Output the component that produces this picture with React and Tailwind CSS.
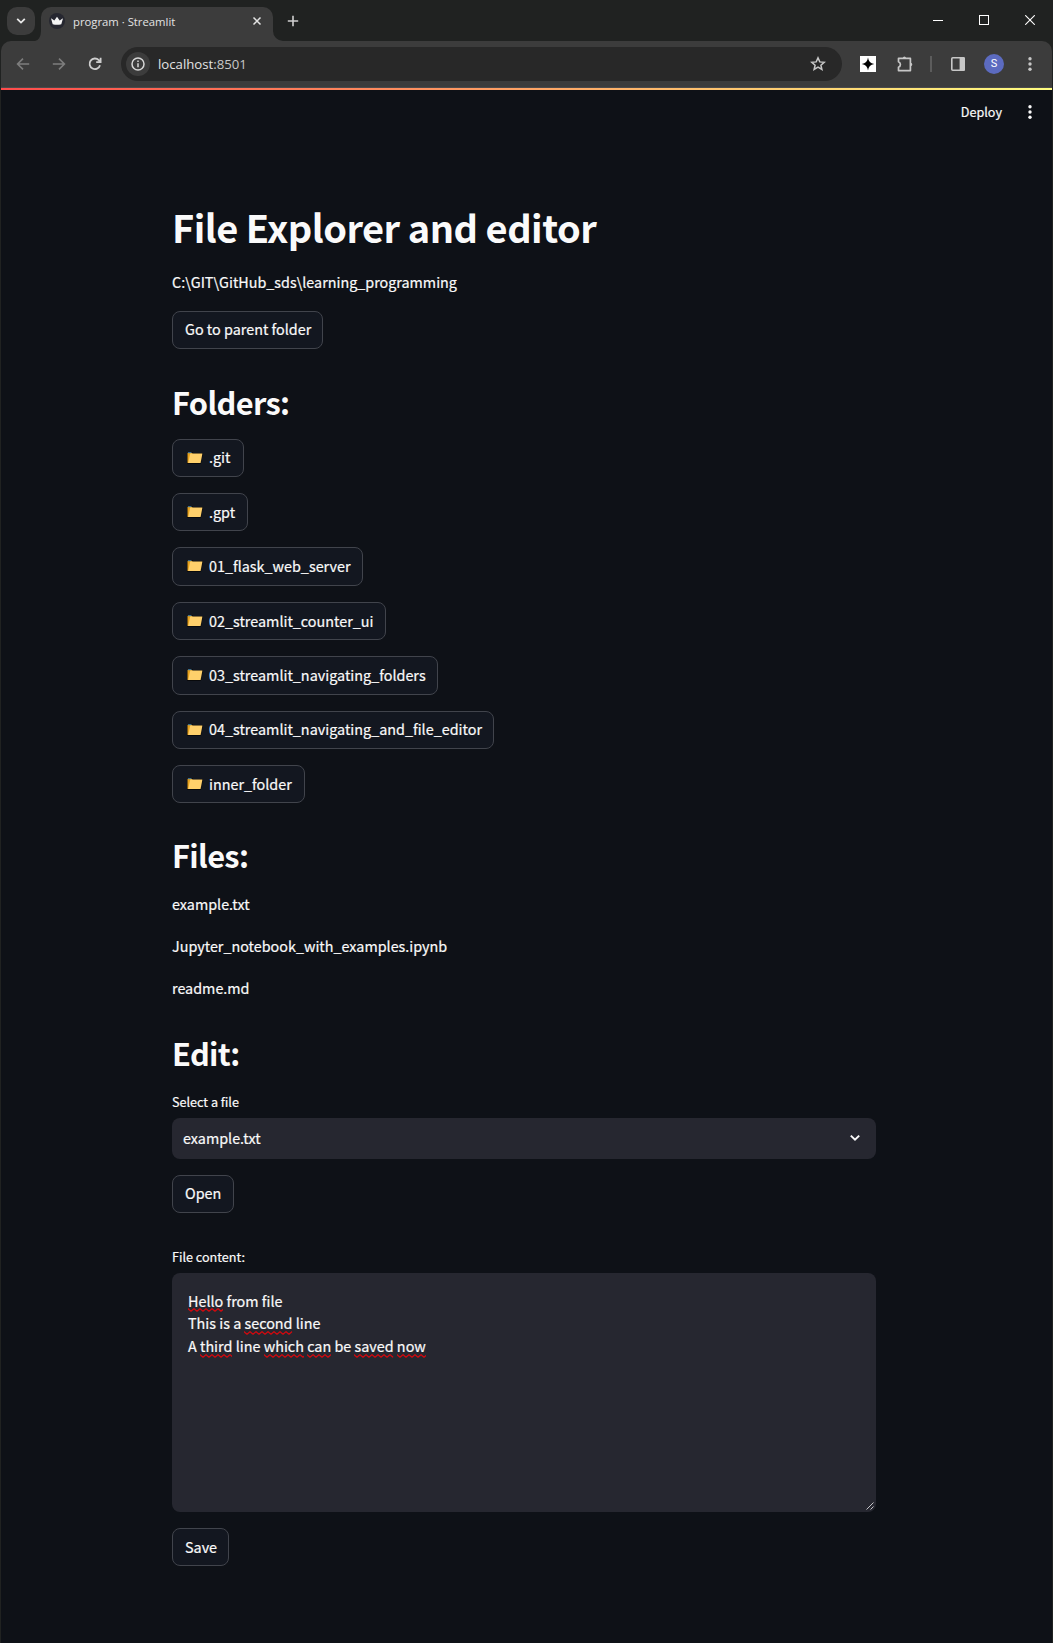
import React from "react";

const source = "font-['Noto_Sans_CJK_SC','Noto_Sans',sans-serif]";
const chrome = "font-['Open_Sans','Noto_Sans',sans-serif]";

const folders = [
  { name: ".git", width: "w-[72px]" },
  { name: ".gpt", width: "w-[76px]" },
  { name: "01_flask_web_server", width: "w-[191px]" },
  { name: "02_streamlit_counter_ui", width: "w-[214px]" },
  { name: "03_streamlit_navigating_folders", width: "w-[266px]" },
  { name: "04_streamlit_navigating_and_file_editor", width: "w-[322px]" },
  { name: "inner_folder", width: "w-[133px]" },
];

const files = ["example.txt", "Jupyter_notebook_with_examples.ipynb", "readme.md"];

function FolderIcon() {
  return (
    <svg width="18" height="14" viewBox="0 0 18 14" className="ml-px mr-[5px] mt-px shrink-0">
      <path d="M1.5 1.5h5l1 1h9l-2 10h-13z" fill="#0a0b0d" stroke="#08090b" strokeWidth="1" />
      <path d="M1.5 1.8h4l1 1V12H1.5z" fill="#e8a21d" />
      <path d="M2 1.2h3.4v1H2z" fill="#3b7fae" />
      <path d="M4.2 2.6h12.2L14.6 12H2.2z" fill="#ffd06b" />
    </svg>
  );
}

function Button({ width, children }) {
  return (
    <button
      className={`flex h-[38.4px] shrink-0 items-center whitespace-nowrap rounded-lg border border-[#41444c] bg-[#131720] pb-[1.2px] pl-3 text-left text-[14.38px] leading-[25.6px] text-[#fafafa] ${width}`}
    >
      {children}
    </button>
  );
}

function SectionHeading({ className, children }) {
  return (
    <h2 className={`text-[30.8px] font-bold leading-[43px] tracking-[-0.65px] [-webkit-text-stroke:0] ${className}`}>
      {children}
    </h2>
  );
}

function Misspelt({ children }) {
  return (
    <span className="relative inline-block">
      {children}
      <svg className="absolute bottom-0 left-0 h-[4px] w-full" aria-hidden="true">
        <defs>
          <pattern id="squiggle" width="6" height="4" patternUnits="userSpaceOnUse">
            <path d="M-1 -.3L0 .6L3 3.2L6 .6L7 -.3" fill="none" stroke="#d5070d" strokeWidth="1.2" />
          </pattern>
        </defs>
        <rect width="100%" height="4" fill="url(#squiggle)" />
      </svg>
    </span>
  );
}

function Kebab({ fill }) {
  return (
    <svg width="16" height="16" viewBox="0 0 16 16" fill={fill}>
      <circle cx="8" cy="2.7" r="1.7" />
      <circle cx="8" cy="8" r="1.7" />
      <circle cx="8" cy="13.3" r="1.7" />
    </svg>
  );
}

function TabStrip() {
  return (
    <div className="flex h-[41px] bg-[#202221]">
      <div className="ml-[6px] mt-[7px] flex size-7 items-center justify-center rounded-[10px] bg-[#3c3c3c]">
        <svg width="10" height="8" viewBox="0 0 10 8" fill="none" stroke="#e8e8e8" strokeWidth="1.8">
          <path d="M1.2 1.8L5 5.6L8.8 1.8" />
        </svg>
      </div>
      <svg width="6" height="10" viewBox="0 0 6 10" className="mt-[31px]">
        <path d="M0 10A6 10 0 0 0 6 0V10z" fill="#3c3c3c" />
      </svg>
      <div className="mt-[7px] flex h-[34px] w-[232px] items-center rounded-t-[10px] bg-[#3c3c3c] pb-[6px]">
        <div className="ml-2 flex size-4 items-center justify-center rounded-full bg-[#262730]">
          <svg width="14" height="10" viewBox="0 0 14 10">
            <path d="M1 2.3L4.3 4.5L7 .8L9.7 4.5L13 2.3L11.3 8.2Q7 9.4 2.7 8.2Z" fill="#f4f4f4" />
          </svg>
        </div>
        <span className={`ml-2 mt-px w-[120px] whitespace-nowrap text-[11.3px] leading-4 text-[#e3e3e3] ${chrome}`}>
          program · Streamlit
        </span>
        <svg width="10" height="10" viewBox="0 0 10 10" className="ml-[59px]" stroke="#e3e3e3" strokeWidth="1.5">
          <path d="M1.5 1.5L8.5 8.5M8.5 1.5L1.5 8.5" />
        </svg>
      </div>
      <svg width="10" height="10" viewBox="0 0 10 10" className="mt-[31px]">
        <path d="M0 0A10 10 0 0 0 10 10H0z" fill="#3c3c3c" />
      </svg>
      <svg width="12" height="12" viewBox="0 0 12 12" className="ml-[4px] mt-[15px]" stroke="#d0d0d0" strokeWidth="1.6">
        <path d="M6 .8V11.2M.8 6H11.2" />
      </svg>
      <div className="ml-auto mr-[17px] flex h-10 items-center gap-9 text-white">
        <svg width="10" height="10" viewBox="0 0 10 10" stroke="currentColor">
          <path d="M0 5.5H10" />
        </svg>
        <svg width="10" height="10" viewBox="0 0 10 10" fill="none" stroke="currentColor">
          <rect x=".5" y=".5" width="9" height="9" />
        </svg>
        <svg width="10" height="10" viewBox="0 0 10 10" stroke="currentColor" strokeWidth="1.1">
          <path d="M.2 .2L9.8 9.8M9.8 .2L.2 9.8" />
        </svg>
      </div>
    </div>
  );
}

function Toolbar() {
  return (
    <div className="flex h-[47px] items-center rounded-t-[10px] border-b border-[#4a4a4c] bg-[#3c3c3c]">
      <svg width="14" height="14" viewBox="0 0 14 14" className="ml-[15px]" fill="none" stroke="#7d7d7d" strokeWidth="1.6">
        <path d="M13.2 7H1.8M7 1.6L1.6 7L7 12.4" />
      </svg>
      <svg width="14" height="14" viewBox="0 0 14 14" className="ml-[22px]" fill="none" stroke="#7d7d7d" strokeWidth="1.6">
        <path d="M.8 7H12.2M7 1.6L12.4 7L7 12.4" />
      </svg>
      <svg width="14" height="14" viewBox="0 0 14 14" className="ml-[22px]" fill="none" stroke="#cfcfcf" strokeWidth="1.8">
        <path d="M12 8.2A5.3 5.3 0 1 1 10.8 3.2L12.6 5M12.6 .8V5.2H8.2" />
      </svg>
      <div className="ml-[19px] flex h-[34px] w-[721px] items-center rounded-full bg-[#282828] pl-[5px] pr-4">
        <div className="flex size-6 items-center justify-center rounded-full bg-[#3c3c3c]">
          <svg width="14" height="14" viewBox="0 0 14 14" fill="none" stroke="#d6d6d6" strokeWidth="1.5">
            <circle cx="7" cy="7" r="6" />
            <path d="M7 6.2V10.3M7 3.6V5.1" />
          </svg>
        </div>
        <span className={`ml-2 whitespace-nowrap text-[13.2px] leading-5 text-[#e3e3e3] ${chrome}`}>
          localhost<span className="text-[#c7c7c7]">:8501</span>
        </span>
        <svg width="16" height="16" viewBox="0 0 16 16" className="ml-auto" fill="none" stroke="#c7c7c7" strokeWidth="1.5">
          <path d="M8 1.9L9.8 5.9L14.2 6.3L10.9 9.2L11.9 13.5L8 11.2L4.1 13.5L5.1 9.2L1.8 6.3L6.2 5.9Z" />
        </svg>
      </div>
      <svg width="16" height="16" viewBox="0 0 16 16" className="ml-[18px]">
        <rect width="16" height="16" fill="#fff" />
        <path d="M8 1.5Q8.7 7.2 14.2 8Q8.7 8.8 8 14.5Q7.3 8.8 1.8 8Q7.3 7.2 8 1.5Z" fill="#000" />
      </svg>
      <svg width="18" height="18" viewBox="0 0 18 18" className="ml-5" fill="none" stroke="#c7c7c7" strokeWidth="1.7">
        <path d="M2.5 3.4H14.4V15.6H2.5V12.2Q4.4 11.4 4.4 9.5T2.5 6.8Z" strokeLinejoin="round" />
        <path d="M6.8 3.2A1.6 1.7 0 0 1 10 3.2ZM14.6 7.8A1.7 1.6 0 0 1 14.6 11Z" fill="#c7c7c7" stroke="none" />
      </svg>
      <div className="ml-4 h-4 w-[2px] bg-[#5c5c5c]" />
      <svg width="14" height="14" viewBox="0 0 14 14" className="ml-[19px]">
        <rect x=".8" y=".8" width="12.4" height="12.4" rx="1" fill="none" stroke="#c7c7c7" strokeWidth="1.6" />
        <path d="M8.6 0H12.5Q14 0 14 1.5V12.5Q14 14 12.5 14H8.6z" fill="#c7c7c7" />
      </svg>
      <div className="ml-[19px] flex size-5 items-center justify-center rounded-full bg-[#5c6bc0] font-['Roboto',sans-serif] text-[11px] text-white">
        S
      </div>
      <div className="ml-[18px]">
        <Kebab fill="#c7c7c7" />
      </div>
    </div>
  );
}

export default function App() {
  return (
    <div className="h-[1643px] w-[1053px] overflow-hidden bg-[#202221] px-px">
      <TabStrip />
      <Toolbar />
      <div className={`flex h-[1555px] flex-col bg-[#0e1117] text-[#fafafa] [-webkit-text-stroke:0.2px] ${source}`}>
        <div className="h-[2px] shrink-0 bg-[linear-gradient(90deg,#ff4b4b,#fffd80)]" />
        <header className="flex h-[44px] shrink-0 items-center justify-end">
          <span className="text-[12.6px] leading-[22px]">Deploy</span>
          <div className="ml-5 mr-[14px]">
            <Kebab fill="#fafafa" />
          </div>
        </header>
        <main className="ml-[171px] flex w-[704px] flex-col">
          <h1 className="mt-[66px] whitespace-nowrap text-[38px] font-bold leading-[53px] tracking-[-0.52px] [-webkit-text-stroke:0]">
            File Explorer and editor
          </h1>
          <p className="mt-[16px] text-[14.35px] leading-[25.6px]">C:\GIT\GitHub_sds\learning_programming</p>
          <div className="mt-4">
            <Button width="w-[151px]">Go to parent folder</Button>
          </div>
          <SectionHeading className="h-[89.6px] pt-[31px]">Folders:</SectionHeading>
          <div className="flex flex-col gap-4">
            {folders.map((folder) => (
              <Button key={folder.name} width={folder.width}>
                <FolderIcon />
                {folder.name}
              </Button>
            ))}
          </div>
          <SectionHeading className="h-[87.6px] pt-[30px]">Files:</SectionHeading>
          <div className="flex flex-col gap-4 text-[14.35px] leading-[26px]">
            {files.map((file) => (
              <p key={file}>{file}</p>
            ))}
          </div>
          <SectionHeading className="h-[89.6px] pt-[30px]">Edit:</SectionHeading>
          <label className="text-[12.6px] leading-[22px]">Select a file</label>
          <div className="mt-[5px] flex h-[41px] items-center justify-between rounded-lg bg-[#262730] pl-[11px] pr-4 text-[14.35px] leading-[25.6px]">
            <span>example.txt</span>
            <svg width="10" height="8" viewBox="0 0 10 8" fill="none" stroke="#fafafa" strokeWidth="2">
              <path d="M.8 1.6L5 5.6L9.2 1.6" />
            </svg>
          </div>
          <div className="mt-4">
            <Button width="w-[62px]">Open</Button>
          </div>
          <label className="mt-[33px] text-[12.6px] leading-[22px]">File content:</label>
          <div className="relative mt-[5px] h-[239px] rounded-lg bg-[#262730] pl-4 pt-[17px] text-[14.38px] leading-[22.6px]">
            <div>
              <Misspelt>Hello</Misspelt> from file
            </div>
            <div>
              This is a <Misspelt>second</Misspelt> line
            </div>
            <div>
              A <Misspelt>third</Misspelt> line <Misspelt>which</Misspelt> <Misspelt>can</Misspelt> be{" "}
              <Misspelt>saved</Misspelt> <Misspelt>now</Misspelt>
            </div>
            <svg width="9" height="9" viewBox="0 0 9 9" className="absolute bottom-px right-px" stroke="#c4c4c8" strokeWidth="1">
              <path d="M.5 7.5L7.5 .5M4.5 7.5L7.5 4.5" />
            </svg>
          </div>
          <div className="mt-4">
            <Button width="w-[57px]">Save</Button>
          </div>
        </main>
      </div>
    </div>
  );
}
